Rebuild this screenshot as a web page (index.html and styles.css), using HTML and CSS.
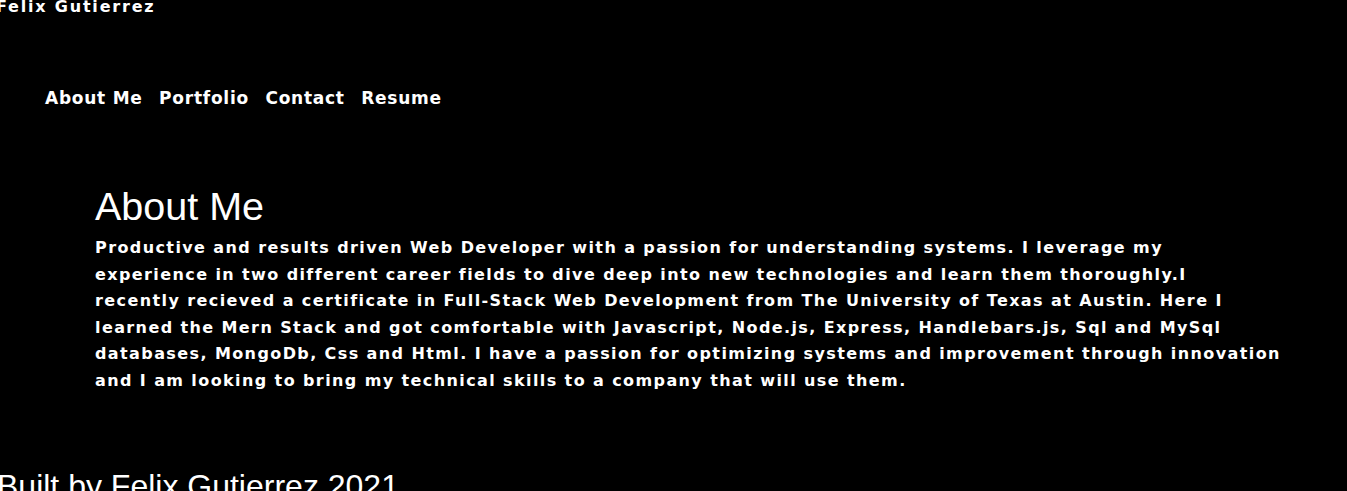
FILE: index.html
```html
<!DOCTYPE html>
<html lang="en">
<head>
<meta charset="utf-8">
<title>Felix Gutierrez</title>
<link rel="stylesheet" href="styles.css">
</head>
<body>
<header class="site-header">
  <h1 class="site-title">Felix Gutierrez</h1>
  <nav class="site-nav">
    <a class="nav-link" href="#about">About Me</a>
    <a class="nav-link" href="#portfolio">Portfolio</a>
    <a class="nav-link" href="#contact">Contact</a>
    <a class="nav-link" href="#resume">Resume</a>
  </nav>
</header>
<main class="content">
  <section class="about" id="about">
    <h2 class="about-title">About Me</h2>
    <p class="about-text">Productive and results driven Web Developer with a passion for understanding systems. I leverage my<br>
    experience in two different career fields to dive deep into new technologies and learn them thoroughly.I<br>
    recently recieved a certificate in Full-Stack Web Development from The University of Texas at Austin. Here I<br>
    learned the Mern Stack and got comfortable with Javascript, Node.js, Express, Handlebars.js, Sql and MySql<br>
    databases, MongoDb, Css and Html. I have a passion for optimizing systems and improvement through innovation<br>
    and I am looking to bring my technical skills to a company that will use them.</p>
  </section>
</main>
<footer class="site-footer">Built by Felix Gutierrez 2021</footer>
</body>
</html>
```
FILE: styles.css
```css
html, body {
  margin: 0;
  padding: 0;
  background: #000;
  color: #fff;
}
body {
  font-family: "DejaVu Sans", sans-serif;
  overflow: hidden;
}
.site-header {
  display: flex;
  flex-direction: column;
}
.site-title {
  margin: -2px 0 0 -4px;
  font-size: 16px;
  line-height: 18px;
  font-weight: bold;
  letter-spacing: 1.8px;
}
.site-nav {
  display: flex;
  gap: 16.5px;
  margin-top: 70px;
  padding-left: 45px;
}
.nav-link {
  color: #fff;
  text-decoration: none;
  font-weight: bold;
  font-size: 17px;
  line-height: 24px;
  letter-spacing: 0.75px;
}
.content {
  padding: 73px 0 0 95px;
}
.about {
  width: 1210px;
}
.about-title {
  margin: 0;
  font-family: "Liberation Sans", Arial, sans-serif;
  font-weight: normal;
  font-size: 39.5px;
  line-height: 46px;
}
.about-text {
  margin: 6px 0 0;
  font-weight: bold;
  font-size: 16px;
  line-height: 26.6px;
  letter-spacing: 1.4px;
}
.site-footer {
  margin: 73px 0 0 -3px;
  font-family: "Liberation Sans", Arial, sans-serif;
  font-size: 32px;
  line-height: 37px;
}
```
